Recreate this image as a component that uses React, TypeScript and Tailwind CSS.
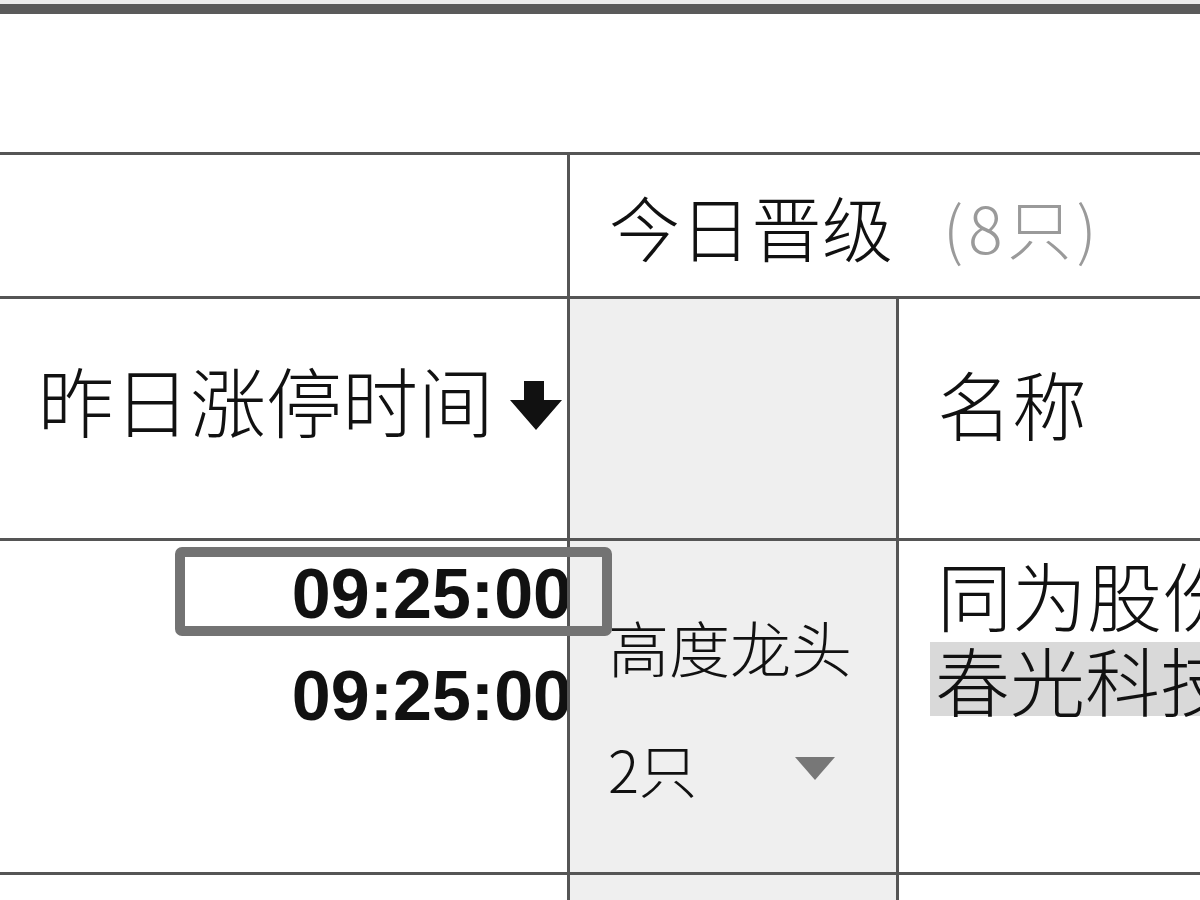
const line = "border-[#555]";

function SortArrow() {
  return (
    <svg width="54" height="50" viewBox="0 0 54 50" className="shrink-0">
      <path d="M15 0H35V19H53L27 49L1 19H15Z" fill="#111" />
    </svg>
  );
}

function Caret() {
  return (
    <svg width="40" height="23" viewBox="0 0 40 23">
      <path d="M0 0H40L20 23Z" fill="#777" />
    </svg>
  );
}

export default function App() {
  return (
    <div className="relative h-[900px] w-[1200px] overflow-hidden bg-white font-['Noto_Sans_CJK_SC',sans-serif] font-light text-[#111]">
      <div className="h-1 bg-[#ececec]" />
      <div className="h-[10px] bg-[#5a5a5a]" />
      <div className="h-[138px]" />

      <div className={`border-t-[3px] ${line}`}>
        {/* group header */}
        <div className={`flex h-[144px] border-b-[3px] ${line}`}>
          <div className={`w-[570px] shrink-0 border-r-[3px] ${line}`} />
          <div className="flex flex-1 items-center whitespace-nowrap pl-[39px] leading-none">
            <span className="text-[71px]">今日晋级</span>
            <span className="ml-[50px] text-[64px] tracking-[5px] text-[#9a9a9a]">(8只)</span>
          </div>
        </div>

        {/* column header */}
        <div className={`flex h-[242px] border-b-[3px] ${line}`}>
          <div className={`flex w-[570px] shrink-0 items-center justify-end gap-[15px] border-r-[3px] pb-[26px] pr-[4px] ${line}`}>
            <span className="pb-[14px] text-[76px] leading-none">昨日涨停时间</span>
            <SortArrow />
          </div>
          <div className={`w-[329px] shrink-0 border-r-[3px] bg-[#efefef] ${line}`} />
          <div className="flex flex-1 items-center pb-[32px] pl-[38px]">
            <span className="whitespace-nowrap text-[75px] leading-none">名称</span>
          </div>
        </div>

        {/* first group row */}
        <div className={`relative flex h-[334px] border-b-[3px] ${line}`}>
          <div className={`w-[570px] shrink-0 overflow-hidden border-r-[3px] ${line}`}>
            <div className="-mr-[5px] flex flex-col items-end pt-[18px] font-['Liberation_Sans',sans-serif] text-[70px] font-bold leading-none">
              <span>09:25:00</span>
              <span className="mt-[32px]">09:25:00</span>
            </div>
          </div>
          <div className={`w-[329px] shrink-0 border-r-[3px] bg-[#efefef] pl-[38px] pr-[61px] pt-[75px] ${line}`}>
            <div className="whitespace-nowrap text-[61px] leading-none">高度龙头</div>
            <div className="mt-[62px] flex items-center justify-between">
              <span className="text-[58px] leading-none">2只</span>
              <Caret />
            </div>
          </div>
          <div className="flex-1 whitespace-nowrap pl-[31px] pt-[15px] text-[75px] leading-none">
            <div className="pl-[7px]">同为股份</div>
            <div className="mt-[11px] inline-block h-[74px] bg-[#d9d9d9] pl-[5px] leading-[74px]">春光科技</div>
          </div>

          {/* focused cell outline */}
          <div className="pointer-events-none absolute left-[175px] top-[6px] h-[89px] w-[437px] rounded-[7px] border-[10px] border-[#737373]" />
        </div>

        {/* next row */}
        <div className="flex h-[40px]">
          <div className={`w-[570px] shrink-0 border-r-[3px] ${line}`} />
          <div className={`w-[329px] shrink-0 border-r-[3px] bg-[#efefef] ${line}`} />
          <div className="flex-1" />
        </div>
      </div>
    </div>
  );
}
